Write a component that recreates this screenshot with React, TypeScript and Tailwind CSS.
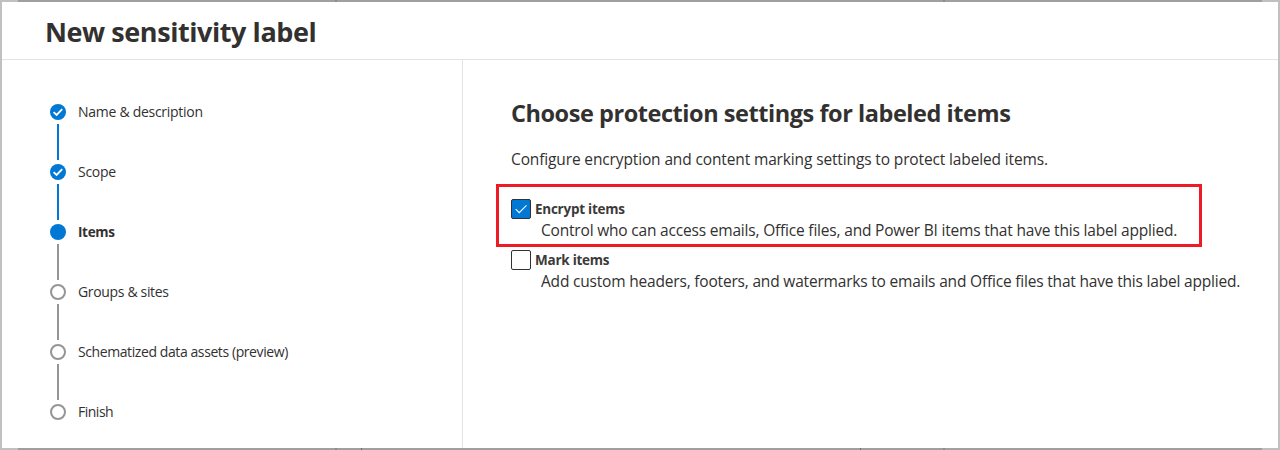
type StepState = "done" | "current" | "todo";

const steps: { label: string; state: StepState; text: string }[] = [
  { label: "Name & description", state: "done", text: "text-[14px] tracking-[-0.28px]" },
  { label: "Scope", state: "done", text: "text-[14px] tracking-[-0.3px]" },
  { label: "Items", state: "current", text: "text-[13.5px] font-bold tracking-[-0.35px]" },
  { label: "Groups & sites", state: "todo", text: "text-[14px] tracking-[-0.34px]" },
  { label: "Schematized data assets (preview)", state: "todo", text: "text-[14px] tracking-[-0.41px]" },
  { label: "Finish", state: "todo", text: "text-[14px] tracking-[-0.5px]" },
];

function StepMarker({ state }: { state: StepState }) {
  if (state === "todo") {
    return <span className="size-4 rounded-full border-2 border-[#979593]" />;
  }
  return (
    <svg viewBox="0 0 16 16" className="size-4">
      <circle cx="8" cy="8" r="8" fill="#0078d4" />
      {state === "done" && (
        <path d="M3.6 8.1 L6.6 11 L12.2 5.2" fill="none" stroke="#fff" strokeWidth="1.8" />
      )}
    </svg>
  );
}

function Stepper() {
  return (
    <ol className="flex w-[461px] shrink-0 flex-col border-r border-[#e3e3e3] pt-11 pl-12">
      {steps.map((step, i) => (
        <li key={step.label} className="flex h-[60px] shrink-0 gap-3">
          <div className="flex w-4 flex-col items-center gap-1">
            <StepMarker state={step.state} />
            {i < steps.length - 1 && (
              <span className={step.state === "done" ? "h-9 w-0.5 bg-[#0078d4]" : "h-9 w-0.5 bg-[#979593]"} />
            )}
          </div>
          <span className={`h-4 leading-4 whitespace-nowrap text-[#323130] ${step.text}`}>
            {step.label}
          </span>
        </li>
      ))}
    </ol>
  );
}

function Option({ title, detail, checked = false }: { title: string; detail: string; checked?: boolean }) {
  return (
    <div>
      <label className="flex h-5 items-center gap-1">
        <span
          className={
            checked
              ? "flex size-5 items-center justify-center rounded-[2px] border border-[#323130] bg-[#0078d4]"
              : "flex size-5 items-center justify-center rounded-[2px] border border-[#323130] bg-white"
          }
        >
          {checked && (
            <svg viewBox="0 0 18 18" className="size-[18px]">
              <path d="M3.7 9.2 L7.2 12.7 L14.5 5.4" fill="none" stroke="#fff" strokeWidth="1.1" />
            </svg>
          )}
        </span>
        <span className="text-[13.5px] leading-5 font-bold tracking-[-0.25px] text-[#3b3a39]">{title}</span>
      </label>
      <p className="pl-[30px] text-[15.5px] leading-[22px] tracking-[-0.19px] whitespace-nowrap text-[#323130]">
        {detail}
      </p>
    </div>
  );
}

function EdgeTop() {
  return (
    <div className="flex h-0.5 shrink-0 bg-[#9f9f9f]">
      <span className="w-[18px] bg-[#c0c0c0]" />
      <span className="ml-[317px] w-0.5 bg-[#8c8c8c]" />
      <span className="ml-[606px] w-0.5 bg-[#8c8c8c]" />
      <span className="ml-auto w-[18px] bg-[#c0c0c0]" />
    </div>
  );
}

function EdgeBottom() {
  return (
    <div className="flex h-0.5 shrink-0 bg-[#9f9f9f]">
      <span className="w-[18px] bg-[#c0c0c0]" />
      <span className="ml-[317px] w-0.5 bg-[#8c8c8c]" />
      <span className="ml-6 w-px bg-[#6e6e6e]" />
      <span className="ml-[498px] w-px bg-[#6e6e6e]" />
      <span className="ml-[82px] w-0.5 bg-[#8c8c8c]" />
      <span className="ml-auto w-[18px] bg-[#c0c0c0]" />
    </div>
  );
}

export default function App() {
  return (
    <div className="flex h-[450px] w-[1280px] flex-col overflow-hidden bg-white font-['Open_Sans','Noto_Sans',sans-serif] text-[#323130]">
      <EdgeTop />
      <div className="flex min-h-0 grow flex-col border-x-2 border-[#c0c0c0]">
        <header className="flex h-[58px] shrink-0 items-center border-b border-[#e3e3e3] pt-0.5 pl-[43px]">
          <h1 className="text-[27px] leading-9 font-bold tracking-[-0.43px]">New sensitivity label</h1>
        </header>
        <div className="flex min-h-0 grow">
          <Stepper />
          <main className="grow pt-[37px] pl-[33px]">
            <h2 className="pl-[15px] text-[23.5px] leading-8 font-bold tracking-[-0.45px] whitespace-nowrap">
              Choose protection settings for labeled items
            </h2>
            <p className="mt-[18px] pl-[15px] text-[15.5px] leading-6 tracking-[-0.135px]">
              Configure encryption and content marking settings to protect labeled items.
            </p>
            <div className="mt-[13px] h-[63px] w-[706px] border-[3px] border-[#ed1c24] pt-3 pl-3">
              <Option
                title="Encrypt items"
                detail="Control who can access emails, Office files, and Power BI items that have this label applied."
                checked
              />
            </div>
            <div className="mt-[3px] pl-[15px]">
              <Option
                title="Mark items"
                detail="Add custom headers, footers, and watermarks to emails and Office files that have this label applied."
              />
            </div>
          </main>
        </div>
      </div>
      <EdgeBottom />
    </div>
  );
}
